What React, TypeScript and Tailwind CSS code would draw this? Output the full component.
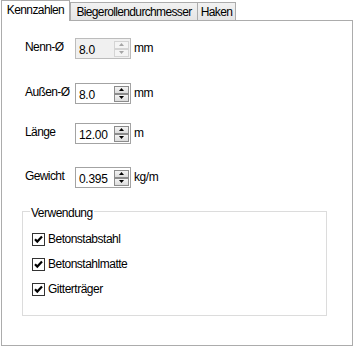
import React from "react";

const font = "font-['Liberation_Sans',Arial,sans-serif]";

function Arrow({ up, disabled }: { up?: boolean; disabled?: boolean }) {
  return (
    <svg width="5" height="3" viewBox="0 0 5 3" className="block">
      <polygon
        points={up ? "0,3 5,3 2.5,0" : "0,0 5,0 2.5,3"}
        fill={disabled ? "#a6a6a6" : "#000"}
      />
    </svg>
  );
}

function Spin({ value, disabled }: { value: string; disabled?: boolean }) {
  const btn = disabled
    ? "h-[8px] w-[15px] flex items-center justify-center border border-[#d4d4d4] bg-[#f4f4f4]"
    : "h-[8px] w-[15px] flex items-center justify-center border border-[#8c8c8c] bg-gradient-to-b from-[#f4f4f4] to-[#dcdcdc]";
  return (
    <div
      className={`flex h-[21px] w-[56px] items-stretch border ${
        disabled ? "border-[#bcbcbc] bg-[#f0f0f0]" : "border-[#a3a3a3] bg-white"
      }`}
    >
      <div className="flex flex-1 items-center pl-[3px] pt-[2px] text-[12px] tracking-[-0.3px] text-black">
        {value}
      </div>
      <div className="flex flex-col justify-center gap-0 py-[1px] pr-[1px]">
        <div className={btn}>
          <Arrow up disabled={disabled} />
        </div>
        <div className={btn}>
          <Arrow disabled={disabled} />
        </div>
      </div>
    </div>
  );
}

function Row({
  label,
  value,
  unit,
  disabled,
  mt,
}: {
  label: string;
  value: string;
  unit: string;
  disabled?: boolean;
  mt: string;
}) {
  return (
    <div className={`flex h-[21px] items-center pl-[3px] ${mt}`}>
      <div className="w-[50px] -mt-[3px] text-[12px] tracking-[-0.6px] text-black">{label}</div>
      <Spin value={value} disabled={disabled} />
      <div className="ml-[3px] -mt-[2px] text-[12px] tracking-[-0.4px] text-black">{unit}</div>
    </div>
  );
}

function Check({ label }: { label: string }) {
  return (
    <div className="flex h-[16px] items-center">
      <div className="flex h-[13px] w-[13px] items-center justify-center border border-[#333] bg-white">
        <svg width="9" height="9" viewBox="0 0 9 9" className="block">
          <polyline points="1,4.2 3.3,6.6 8,1.6" fill="none" stroke="#000" strokeWidth="2.2" />
        </svg>
      </div>
      <div className="ml-[3px] text-[12px] tracking-[-0.5px] text-black">{label}</div>
    </div>
  );
}

export default function App() {
  return (
    <div className={`relative h-[348px] w-[356px] bg-white ${font}`}>
      <div className="relative z-10 flex h-[20px] items-start pl-[1px]">
        <div className="flex h-[21px] w-[69px] items-center justify-center border border-b-0 border-[#acacac] bg-white pb-[2px] text-[12px] tracking-[-0.6px] text-black">
          Kennzahlen
        </div>
        <div className="mt-[2px] flex h-[18px] w-[128px] items-center justify-center border border-b-0 border-[#acacac] bg-gradient-to-b from-[#f2f2f2] to-[#e5e5e5] text-[12px] tracking-[-0.65px] text-black">
          Biegerollendurchmesser
        </div>
        <div className="-ml-[1px] mt-[2px] flex h-[18px] w-[39px] items-center justify-center border border-b-0 border-[#acacac] bg-gradient-to-b from-[#f2f2f2] to-[#e5e5e5] text-[12px] tracking-[-0.6px] text-black">
          Haken
        </div>
      </div>
      <div className="ml-[1px] flex h-[326px] w-[352px] flex-col border border-[#acacac] bg-white pl-[20px] pt-[17px]">
        <Row label="Nenn-Ø" value="8.0" unit="mm" disabled mt="" />
        <Row label="Außen-Ø" value="8.0" unit="mm" mt="mt-[24px]" />
        <Row label="Länge" value="12.00" unit="m" mt="mt-[19px]" />
        <Row label="Gewicht" value="0.395" unit="kg/m" mt="mt-[23px]" />
        <div className="relative mt-[23px] flex h-[105px] w-[305px] flex-col gap-[9px] border border-[#dcdcdc] pl-[9px] pt-[19px]">
          <div className="absolute -top-[8px] left-[7px] bg-white px-[1px] text-[12px] tracking-[-0.5px] text-black">
            Verwendung
          </div>
          <Check label="Betonstabstahl" />
          <Check label="Betonstahlmatte" />
          <Check label="Gitterträger" />
        </div>
      </div>
    </div>
  );
}
